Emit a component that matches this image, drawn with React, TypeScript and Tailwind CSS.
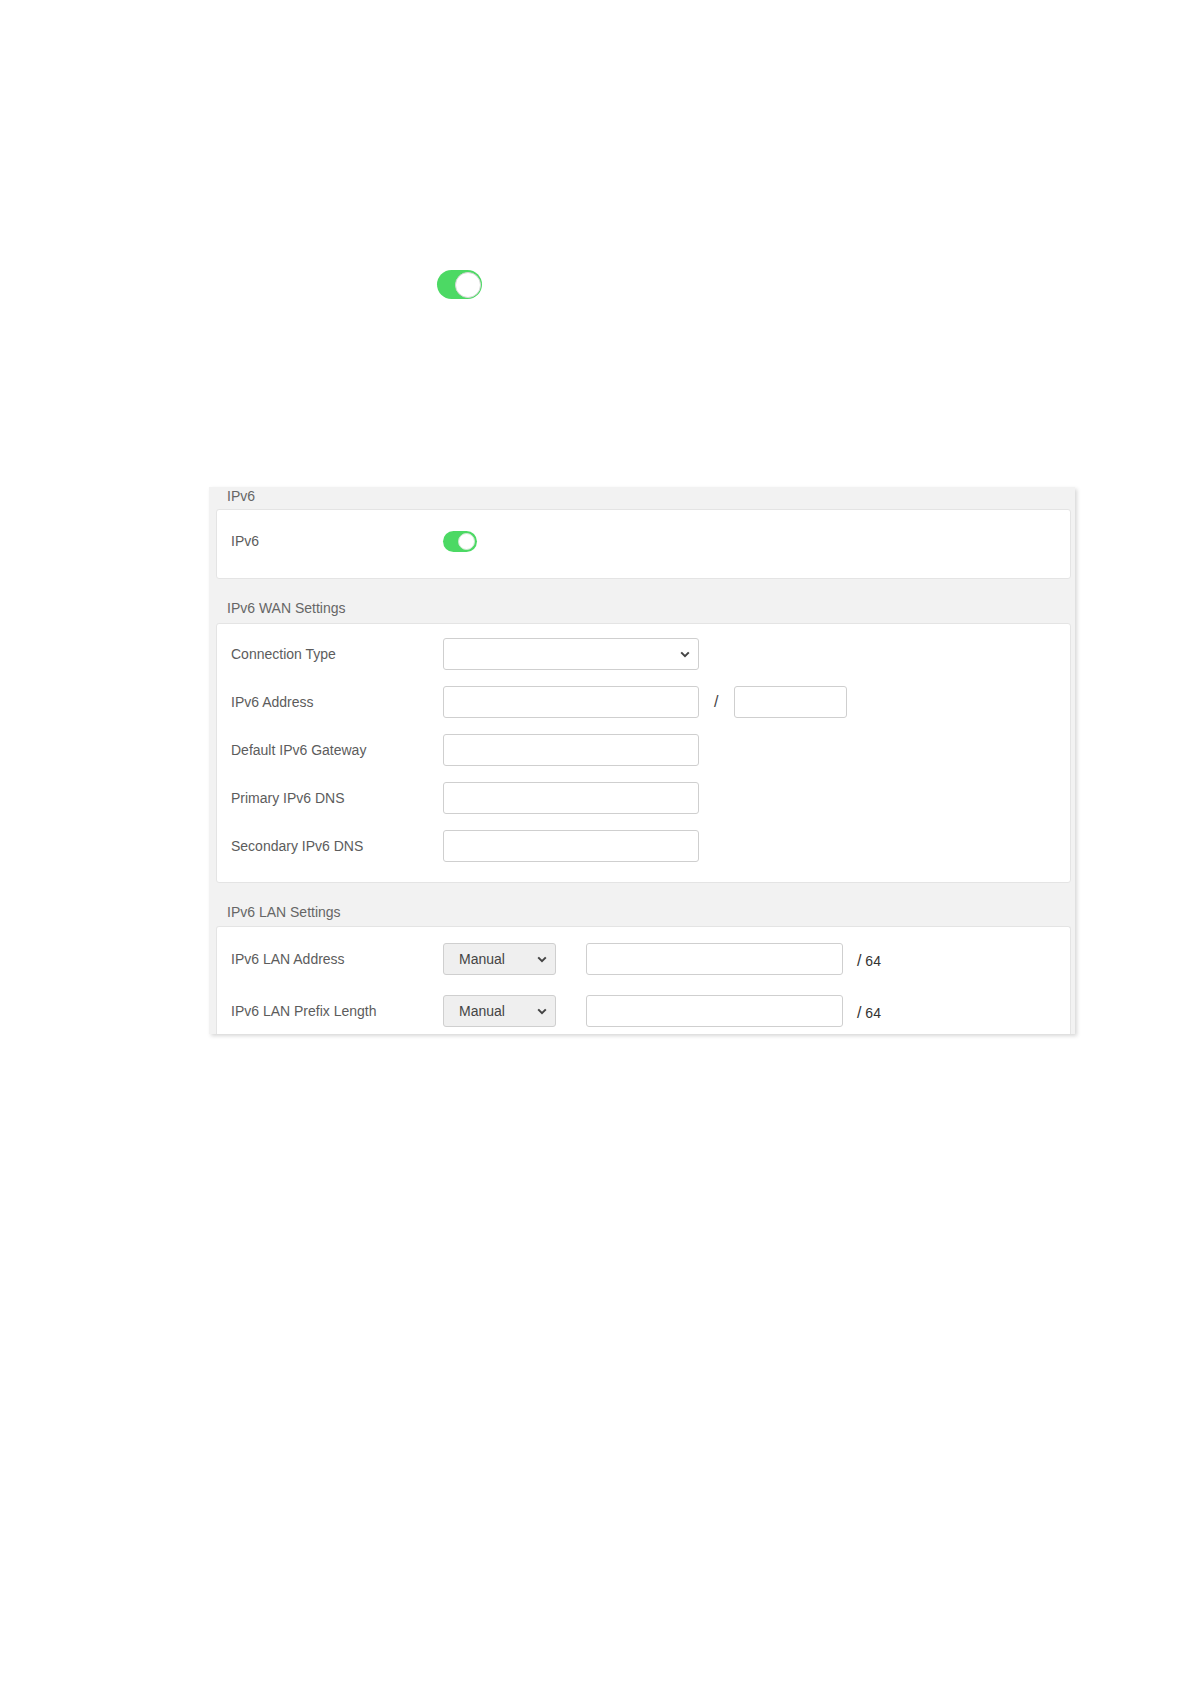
import React from 'react';

function Toggle({ big }: { big?: boolean }) {
  if (big) {
    return (
      <div className="flex h-[29px] w-[45px] items-center justify-end rounded-full bg-[#4cd964] pr-[1.5px]">
        <div className="h-[26px] w-[26px] rounded-full border border-[#d6d6d6] bg-white" />
      </div>
    );
  }
  return (
    <div className="flex h-[21px] w-[34px] items-center justify-end rounded-full bg-[#4cd964] pr-[2px]">
      <div className="h-[17px] w-[17px] rounded-full border border-[#cfe9d3] bg-white" />
    </div>
  );
}

function Chevron() {
  return (
    <svg width="10" height="7" viewBox="0 0 10 7" className="shrink-0">
      <path d="M1.2 1.4 L5 5.2 L8.8 1.4" fill="none" stroke="#444" strokeWidth="2" />
    </svg>
  );
}

function SelectBox({ width, value, gray }: { width: string; value?: string; gray?: boolean }) {
  return (
    <div
      className={`flex h-[32px] ${width} items-center justify-between rounded-[3px] border border-[#cfcfcf] pl-[15px] pr-[8px] text-[14px] text-[#444] ${
        gray ? 'bg-[#efefef]' : 'bg-white'
      }`}
    >
      <span>{value}</span>
      <Chevron />
    </div>
  );
}

function TextBox({ width }: { width: string }) {
  return <div className={`h-[32px] ${width} rounded-[3px] border border-[#cfcfcf] bg-white`} />;
}

function Label({ children }: { children: React.ReactNode }) {
  return <div className="w-[212px] shrink-0 text-[14px] text-[#5c5c5c]">{children}</div>;
}

export default function App() {
  const wanRows = ['IPv6 Address', 'Default IPv6 Gateway', 'Primary IPv6 DNS', 'Secondary IPv6 DNS'];

  return (
    <div className="min-h-[1684px] bg-white pt-[270px] font-['Liberation_Sans',Arial,sans-serif]">
      {/* stand-alone switch */}
      <div className="ml-[437px] w-fit">
        <Toggle big />
      </div>

      {/* IPv6 panel */}
      <div className="ml-[209px] mt-[188px] w-[866px] bg-[#f2f2f2] pl-[7px] pr-[4px] shadow-[2px_2px_4px_rgba(0,0,0,0.16)]">
        <div className="pb-[5px] pl-[11px] pt-[1px] text-[14px] leading-[16px] text-[#666]">IPv6</div>
        <div className="flex h-[70px] items-center rounded-[3px] border border-[#e4e4e4] bg-white pb-[5px] pl-[14px]">
          <Label>IPv6</Label>
          <Toggle />
        </div>

        <div className="pb-[7px] pl-[11px] pt-[21px] text-[14px] leading-[16px] text-[#666]">IPv6 WAN Settings</div>
        <div className="flex flex-col gap-[16px] rounded-[3px] border border-[#e4e4e4] bg-white pb-[20px] pl-[14px] pt-[14px]">
          <div className="flex items-center">
            <Label>Connection Type</Label>
            <SelectBox width="w-[256px]" />
          </div>
          {wanRows.map((label, i) => (
            <div key={label} className="flex items-center">
              <Label>{label}</Label>
              <TextBox width="w-[256px]" />
              {i === 0 && (
                <>
                  <span className="w-[35px] pl-[15px] text-[16px] text-[#444]">/</span>
                  <TextBox width="w-[113px]" />
                </>
              )}
            </div>
          ))}
        </div>

        <div className="pb-[6px] pl-[11px] pt-[21px] text-[14px] leading-[16px] text-[#666]">IPv6 LAN Settings</div>
        <div className="flex flex-col gap-[20px] rounded-t-[3px] border border-b-0 border-[#e4e4e4] bg-white pb-[7px] pl-[14px] pt-[16px]">
          {['IPv6 LAN Address', 'IPv6 LAN Prefix Length'].map((label) => (
            <div key={label} className="flex items-center">
              <Label>{label}</Label>
              <SelectBox width="w-[113px]" value="Manual" gray />
              <div className="ml-[30px]">
                <TextBox width="w-[257px]" />
              </div>
              <span className="ml-[14px] mt-[4px] text-[14px] text-[#333]">
                <span className="text-[16px]">/</span> 64
              </span>
            </div>
          ))}
        </div>
      </div>
    </div>
  );
}
